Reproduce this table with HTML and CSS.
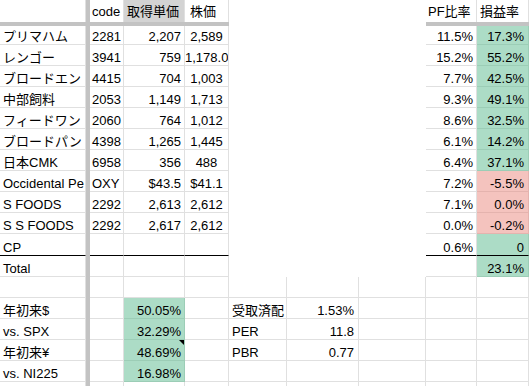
FILE: index.html
```html
<!DOCTYPE html>
<html lang="ja">
<head>
<meta charset="utf-8">
<title>Portfolio</title>
<link rel="stylesheet" href="styles.css">
</head>
<body>
<div class="sheet">
  <div class="row head">
    <div class="c"></div><div class="bar"></div><div class="c b">code</div><div class="c gray">取得単価</div><div class="c kabu">株価</div><div class="x"></div><div class="x"></div><div class="x"></div><div class="c h">PF比率</div><div class="c">損益率</div>
  </div>
  <div class="row freeze">
    <div class="fz"></div><div class="bar"></div><div class="fz"></div><div class="fz"></div><div class="fz"></div><div class="x"></div><div class="x"></div><div class="x"></div><div class="fz"></div><div class="fz"></div>
  </div>
  <div class="row first">
    <div class="c">プリマハム</div><div class="bar"></div><div class="c b">2281</div><div class="c r">2,207</div><div class="c m">2,589</div><div class="x"></div><div class="x"></div><div class="x"></div><div class="c r">11.5%</div><div class="c r g">17.3%</div>
  </div>
  <div class="row">
    <div class="c">レンゴー</div><div class="bar"></div><div class="c b">3941</div><div class="c r">759</div><div class="c m">1,178.0</div><div class="x"></div><div class="x"></div><div class="x"></div><div class="c r">15.2%</div><div class="c r g">55.2%</div>
  </div>
  <div class="row">
    <div class="c">ブロードエン</div><div class="bar"></div><div class="c b">4415</div><div class="c r">704</div><div class="c m">1,003</div><div class="x"></div><div class="x"></div><div class="x"></div><div class="c r">7.7%</div><div class="c r g">42.5%</div>
  </div>
  <div class="row">
    <div class="c">中部飼料</div><div class="bar"></div><div class="c b">2053</div><div class="c r">1,149</div><div class="c m">1,713</div><div class="x"></div><div class="x"></div><div class="x"></div><div class="c r">9.3%</div><div class="c r g">49.1%</div>
  </div>
  <div class="row">
    <div class="c">フィードワン</div><div class="bar"></div><div class="c b">2060</div><div class="c r">764</div><div class="c m">1,012</div><div class="x"></div><div class="x"></div><div class="x"></div><div class="c r">8.6%</div><div class="c r g">32.5%</div>
  </div>
  <div class="row">
    <div class="c">ブロードパン</div><div class="bar"></div><div class="c b">4398</div><div class="c r">1,265</div><div class="c m">1,445</div><div class="x"></div><div class="x"></div><div class="x"></div><div class="c r">6.1%</div><div class="c r g">14.2%</div>
  </div>
  <div class="row">
    <div class="c">日本CMK</div><div class="bar"></div><div class="c b">6958</div><div class="c r">356</div><div class="c m">488</div><div class="x"></div><div class="x"></div><div class="x"></div><div class="c r">6.4%</div><div class="c r g">37.1%</div>
  </div>
  <div class="row">
    <div class="c">Occidental Pe</div><div class="bar"></div><div class="c b">OXY</div><div class="c r">$43.5</div><div class="c m">$41.1</div><div class="x"></div><div class="x"></div><div class="x"></div><div class="c r">7.2%</div><div class="c r p">-5.5%</div>
  </div>
  <div class="row">
    <div class="c">S FOODS</div><div class="bar"></div><div class="c b">2292</div><div class="c r">2,613</div><div class="c m">2,612</div><div class="x"></div><div class="x"></div><div class="x"></div><div class="c r">7.1%</div><div class="c r p">0.0%</div>
  </div>
  <div class="row">
    <div class="c">S S FOODS</div><div class="bar"></div><div class="c b">2292</div><div class="c r">2,617</div><div class="c m">2,612</div><div class="x"></div><div class="x"></div><div class="x"></div><div class="c r">0.0%</div><div class="c r p">-0.2%</div>
  </div>
  <div class="row cp">
    <div class="c">CP</div><div class="bar"></div><div class="c b"></div><div class="c r"></div><div class="c m"></div><div class="x"></div><div class="x"></div><div class="x"></div><div class="c r">0.6%</div><div class="c r g">0</div>
  </div>
  <div class="row">
    <div class="c">Total</div><div class="bar"></div><div class="c b"></div><div class="c"></div><div class="c"></div><div class="x"></div><div class="x"></div><div class="x"></div><div class="c"></div><div class="c r g">23.1%</div>
  </div>
  <div class="row">
    <div class="c"></div><div class="bar"></div><div class="c"></div><div class="c"></div><div class="c"></div><div class="c"></div><div class="c"></div><div class="c"></div><div class="c"></div><div class="c"></div>
  </div>
  <div class="row">
    <div class="c">年初来$</div><div class="bar"></div><div class="c"></div><div class="c r g">50.05%</div><div class="c"></div><div class="c">受取済配</div><div class="c r f">1.53%</div><div class="c"></div><div class="c"></div><div class="c"></div>
  </div>
  <div class="row">
    <div class="c">vs. SPX</div><div class="bar"></div><div class="c"></div><div class="c r g">32.29%</div><div class="c"></div><div class="c">PER</div><div class="c r f">11.8</div><div class="c"></div><div class="c"></div><div class="c"></div>
  </div>
  <div class="row">
    <div class="c">年初来¥</div><div class="bar"></div><div class="c"></div><div class="c r g note">48.69%</div><div class="c"></div><div class="c">PBR</div><div class="c r f">0.77</div><div class="c"></div><div class="c"></div><div class="c"></div>
  </div>
  <div class="row">
    <div class="c">vs. NI225</div><div class="bar"></div><div class="c"></div><div class="c r g">16.98%</div><div class="c"></div><div class="c"></div><div class="c"></div><div class="c"></div><div class="c"></div><div class="c"></div>
  </div>
  <div class="row">
    <div class="c"></div><div class="bar"></div><div class="c"></div><div class="c"></div><div class="c"></div><div class="c"></div><div class="c"></div><div class="c"></div><div class="c"></div><div class="c"></div>
  </div>
</div>
</body>
</html>
```

FILE: styles.css
```css
html, body {
  margin: 0;
  padding: 0;
  background: #ffffff;
}

body {
  overflow: hidden;
}

.sheet {
  width: 529px;
  font-family: "Liberation Sans", Arial, "Noto Sans CJK JP", sans-serif;
  font-size: 13px;
  color: #000000;
}

.row {
  display: grid;
  grid-template-columns: 86px 4px 34px 61px 44px 58px 72px 67px 51px 52px;
  height: 21px;
}

.row > div {
  box-sizing: border-box;
  min-width: 0;
}

.c {
  border-right: 1px solid #e0e0e0;
  border-bottom: 1px solid #e0e0e0;
  padding: 3px 3px 0 3px;
  line-height: 20px;
  white-space: nowrap;
  overflow: hidden;
}

.b {
  padding-left: 2px;
}

.r {
  text-align: right;
}

.m {
  text-align: center;
  padding-left: 0;
  padding-right: 0;
}

.f {
  padding-right: 4px;
}

.x {
  background: #ffffff;
}

.bar,
.fz {
  background: #c3c3c3;
}

.head {
  height: 22px;
}

.head .c {
  border-bottom: none;
  padding-top: 2px;
}

.head .kabu {
  padding-left: 5px;
}

.head .h {
  padding-left: 2px;
}

.freeze {
  height: 4px;
}

.first {
  height: 19px;
}

.first .c {
  padding-top: 1px;
}

.cp {
  height: 22px;
}

.cp .c {
  border-bottom: 1px solid #000000;
  padding-top: 4px;
}

.gray {
  background: #d3d3d3;
}

.g {
  background: #acdcc6;
  border-color: #9ccdb6;
}

.p {
  background: #f4c3be;
  border-color: #e4b3ae;
}

.row > .c:last-child {
  padding-right: 4px;
}

.note {
  position: relative;
}

.note::after {
  content: "";
  position: absolute;
  top: 0;
  right: 0;
  width: 0;
  height: 0;
  border-top: 5px solid #000000;
  border-left: 5px solid transparent;
}
```
